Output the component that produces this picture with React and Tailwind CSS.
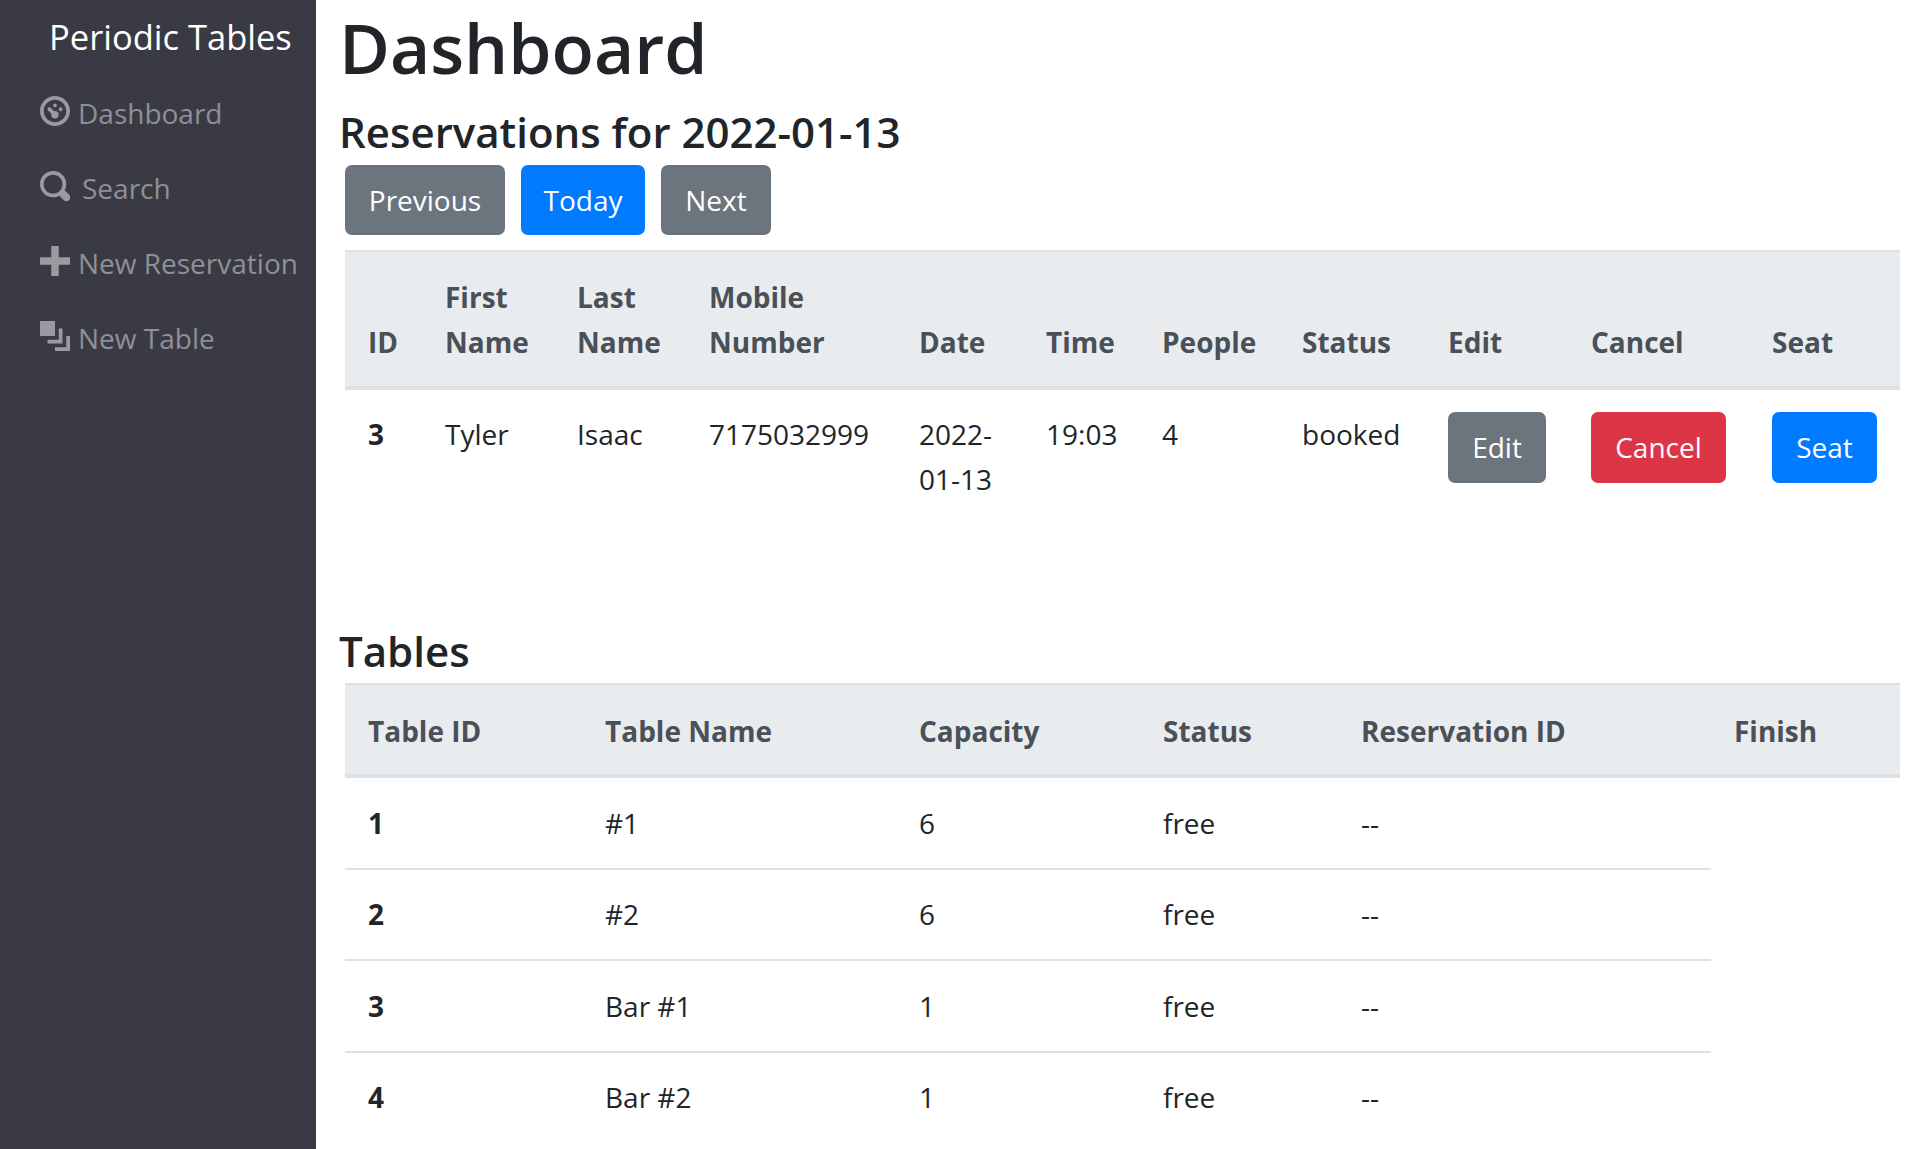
import React from 'react';

const reservationColumns = [
  { label: ['ID'], width: 'w-[77px]' },
  { label: ['First', 'Name'], width: 'w-[132px]' },
  { label: ['Last', 'Name'], width: 'w-[132px]' },
  { label: ['Mobile', 'Number'], width: 'w-[210px]' },
  { label: ['Date'], width: 'w-[127px]' },
  { label: ['Time'], width: 'w-[116px]' },
  { label: ['People'], width: 'w-[140px]' },
  { label: ['Status'], width: 'w-[146px]' },
  { label: ['Edit'], width: 'w-[143px]' },
  { label: ['Cancel'], width: 'w-[181px]' },
  { label: ['Seat'], width: 'w-[151px]' },
];

const tableColumns = [
  { label: 'Table ID', width: 'w-[237px]' },
  { label: 'Table Name', width: 'w-[314px]' },
  { label: 'Capacity', width: 'w-[244px]' },
  { label: 'Status', width: 'w-[198px]' },
  { label: 'Reservation ID', width: 'w-[373px]' },
  { label: 'Finish', width: 'w-[189px]' },
];

const tables = [
  { id: 1, name: '#1', capacity: 6 },
  { id: 2, name: '#2', capacity: 6 },
  { id: 3, name: 'Bar #1', capacity: 1 },
  { id: 4, name: 'Bar #2', capacity: 1 },
];

const navItems = [
  {
    label: 'Dashboard',
    gap: 'ml-[8px]',
    path: 'M4 0c-2.2 0-4 1.8-4 4s1.8 4 4 4 4-1.8 4-4-1.8-4-4-4zm0 1c1.66 0 3 1.34 3 3s-1.34 3-3 3-3-1.34-3-3 1.34-3 3-3zm0 1c-.28 0-.5.22-.5.5s.22.5.5.5.5-.22.5-.5-.22-.5-.5-.5zm-1.66 1a.5.5 0 0 0-.19.84l.91.91c-.02.08-.06.16-.06.25 0 .55.45 1 1 1s1-.45 1-1-.45-1-1-1c-.09 0-.17.04-.25.06l-.91-.91a.5.5 0 0 0-.44-.16.5.5 0 0 0-.06 0zm3.16 0c-.28 0-.5.22-.5.5s.22.5.5.5.5-.22.5-.5-.22-.5-.5-.5z',
  },
  {
    label: 'Search',
    gap: 'ml-[12px]',
    path: 'M3.5 0c-1.93 0-3.5 1.57-3.5 3.5s1.57 3.5 3.5 3.5c.59 0 1.17-.14 1.66-.41a1 1 0 0 0 .13.13l1 1a1.02 1.02 0 1 0 1.44-1.44l-1-1a1 1 0 0 0-.16-.13c.27-.49.44-1.06.44-1.66 0-1.93-1.57-3.5-3.5-3.5zm0 1c1.39 0 2.5 1.11 2.5 2.5 0 .66-.24 1.27-.66 1.72-.01.01-.02.02-.03.03a1 1 0 0 0-.13.13c-.44.4-1.04.63-1.69.63-1.39 0-2.5-1.11-2.5-2.5s1.11-2.5 2.5-2.5z',
  },
  {
    label: 'New Reservation',
    gap: 'ml-[8px]',
    path: 'M3 0v3h-3v2h3v3h2v-3h3v-2h-3v-3h-2z',
  },
  {
    label: 'New Table',
    gap: 'ml-[8px]',
    path: 'M0 0v4h4v-4h-4zm5 2v3h-3v1h4v-4h-1zm2 2v3h-3v1h4v-4h-1z',
  },
];

const cell = 'pl-[23px] pr-[22px] py-[22px]';
const headCell = 'pl-[23px] pr-[22px] pt-[23px] pb-[21px]';
const tableHeadCell = 'pl-[23px] pr-[22px] pt-[24px] pb-[20px]';
const rowCell = 'pl-[23px] pr-[22px] pt-[22.5px] pb-[22px] border-[#dee2e6]';

const Button = ({ color, children, className = '' }) => (
  <button className={`h-[70px] rounded-[7px] text-white text-[28px] leading-[45px] ${color} ${className}`}>
    {children}
  </button>
);

const App = () => {
  return (
    <div className="flex h-screen overflow-hidden bg-white text-[#212529] text-[28px] leading-[45px] font-['Open_Sans',sans-serif]">
      <aside className="w-[316px] shrink-0 bg-[#3a3a45]">
        <div className="pt-[14px] pl-[49px] text-white text-[34.5px] leading-[45px]">Periodic Tables</div>
        <nav className="flex flex-col gap-[30px] mt-[32px] pl-[40px]">
          {navItems.map((item) => (
            <a key={item.label} className="flex items-center h-[45px] text-[#8f9095]">
              <svg viewBox="0 0 8 8" className="w-[30px] h-[30px] fill-[#9a9ba1] -mt-[6px]">
                <path d={item.path} />
              </svg>
              <span className={item.gap}>{item.label}</span>
            </a>
          ))}
        </nav>
      </aside>

      <main className="flex-1 pl-[23px] min-w-0">
        <h1 className="text-[69.5px] leading-[90px] mt-[2px] font-semibold">Dashboard</h1>
        <h4 className="text-[42px] leading-[54px] mt-[13px] font-semibold">Reservations for 2022-01-13</h4>
        <div className="flex gap-[16px] ml-[6px] mt-[6px]">
          <Button color="bg-[#6c757d]" className="w-[160px]">Previous</Button>
          <Button color="bg-[#007bff]" className="w-[124px]">Today</Button>
          <Button color="bg-[#6c757d]" className="w-[110px]">Next</Button>
        </div>

        <table className="table-fixed ml-[6px] mt-[15px] w-[1555px] border-collapse">
          <thead>
            <tr className="bg-[#e9ecef] border-t-2 border-b-4 border-[#dee2e6] text-[#495057]">
              {reservationColumns.map((col) => (
                <th key={col.label.join(' ')} className={`${col.width} ${headCell} text-left align-bottom font-bold`}>
                  {col.label.map((line) => (
                    <div key={line}>{line}</div>
                  ))}
                </th>
              ))}
            </tr>
          </thead>
          <tbody>
            <tr>
              <th className={`${cell} text-left align-top font-bold`}>3</th>
              <td className={`${cell} align-top`}>Tyler</td>
              <td className={`${cell} align-top`}>Isaac</td>
              <td className={`${cell} align-top`}>7175032999</td>
              <td className={`${cell} align-top`}>2022-<br />01-13</td>
              <td className={`${cell} align-top`}>19:03</td>
              <td className={`${cell} align-top`}>4</td>
              <td className={`${cell} align-top`}>booked</td>
              <td className={`${cell} align-top`}><Button color="bg-[#6c757d] h-[71px]" className="w-[98px]">Edit</Button></td>
              <td className={`${cell} align-top`}><Button color="bg-[#dc3545] h-[71px]" className="w-[135px]">Cancel</Button></td>
              <td className={`${cell} align-top`}><Button color="bg-[#007bff] h-[71px]" className="w-[105px]">Seat</Button></td>
            </tr>
          </tbody>
        </table>

        <h4 className="text-[42px] leading-[54px] mt-[100px] font-semibold">Tables</h4>
        <table className="table-fixed ml-[6px] mt-[5px] w-[1555px] border-collapse">
          <thead>
            <tr className="bg-[#e9ecef] border-t-2 border-b-4 border-[#dee2e6] text-[#495057]">
              {tableColumns.map((col) => (
                <th key={col.label} className={`${col.width} ${tableHeadCell} text-left font-bold`}>
                  {col.label}
                </th>
              ))}
            </tr>
          </thead>
          <tbody>
            {tables.map((table, index) => {
              const border = index < tables.length - 1 ? 'border-b-2' : '';
              return (
                <tr key={table.id}>
                  <th className={`${rowCell} ${border} text-left font-bold`}>{table.id}</th>
                  <td className={`${rowCell} ${border}`}>{table.name}</td>
                  <td className={`${rowCell} ${border}`}>{table.capacity}</td>
                  <td className={`${rowCell} ${border}`}>free</td>
                  <td className={`${rowCell} ${border}`}>--</td>
                </tr>
              );
            })}
          </tbody>
        </table>
      </main>
    </div>
  );
};

export default App;
